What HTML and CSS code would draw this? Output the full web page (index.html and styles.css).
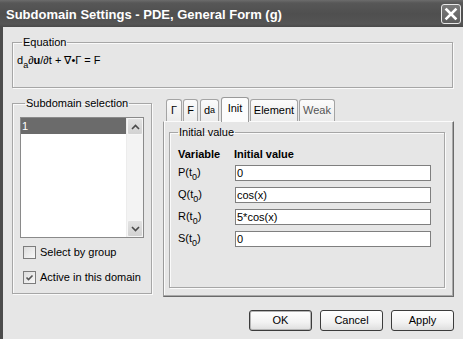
FILE: index.html
```html
<!DOCTYPE html>
<html>
<head>
<meta charset="utf-8">
<link rel="stylesheet" href="styles.css">
</head>
<body>
<div class="titlebar">
  <span class="title">Subdomain Settings - PDE, General Form (g)</span>
  <span class="close"><svg width="18" height="18" viewBox="0 0 18 18"><path d="M4.5 4.5 L13.5 13.5 M13.5 4.5 L4.5 13.5" stroke="#fff" stroke-width="2.6" stroke-linecap="square" fill="none"/></svg></span>
</div>
<div class="body">
  <fieldset class="group eq">
    <legend>Equation</legend>
    <div class="eqtext">d<span class="sub">a</span>∂<b>u</b>/∂t + ∇•Γ = F</div>
  </fieldset>
  <div class="main">
    <fieldset class="group subsel">
      <legend>Subdomain selection</legend>
      <div class="listbox">
        <div class="items"><div class="item sel">1</div></div>
        <div class="scrollbar">
          <span class="sbtn"><svg width="9" height="6" viewBox="0 0 9 6"><path d="M1 5 L4.5 1.5 L8 5" stroke="#4a4a4a" stroke-width="1.6" fill="none"/></svg></span>
          <span class="track"></span>
          <span class="sbtn"><svg width="9" height="6" viewBox="0 0 9 6"><path d="M1 1 L4.5 4.5 L8 1" stroke="#4a4a4a" stroke-width="1.6" fill="none"/></svg></span>
        </div>
      </div>
      <div class="check first"><span class="box"></span>Select by group</div>
      <div class="check second"><span class="box"><svg width="11" height="11" viewBox="0 0 11 11"><path d="M2.5 5.5 L4.5 7.5 L8.5 3.5" stroke="#555" stroke-width="1.6" fill="none"/></svg></span>Active in this domain</div>
    </fieldset>
    <div class="tabs">
      <div class="tabstrip">
        <span class="tab w16">Γ</span>
        <span class="tab w15">F</span>
        <span class="tab w19">d<span class="sub">a</span></span>
        <span class="tab sel">Init</span>
        <span class="tab w48">Element</span>
        <span class="tab w36 dim">Weak</span>
      </div>
      <div class="panel">
        <fieldset class="group init">
          <legend>Initial value</legend>
          <div class="hdr"><span class="c1">Variable</span><span>Initial value</span></div>
          <div class="grid">
            <span class="var">P(t<span class="sub">0</span>)</span><span class="input">0</span>
            <span class="var">Q(t<span class="sub">0</span>)</span><span class="input">cos(x)</span>
            <span class="var">R(t<span class="sub">0</span>)</span><span class="input">5*cos(x)</span>
            <span class="var">S(t<span class="sub">0</span>)</span><span class="input">0</span>
          </div>
        </fieldset>
      </div>
    </div>
  </div>
  <div class="buttons">
    <span class="btn def">OK</span>
    <span class="btn">Cancel</span>
    <span class="btn">Apply</span>
  </div>
</div>
</body>
</html>
```
FILE: styles.css
```css
html, body {
  margin: 0;
  padding: 0;
}
body {
  width: 463px;
  height: 339px;
  overflow: hidden;
  background: #e6e6e6;
  font: 11px/13px "Liberation Sans", Arial, sans-serif;
  color: #000;
}
.titlebar {
  height: 27px;
  box-sizing: border-box;
  background: linear-gradient(#6c6c6c 0, #575757 3px, #4f4f4f 14px, #555 24px, #4a4a4a 27px);
  display: flex;
  align-items: center;
  justify-content: space-between;
  padding: 0 2px 0 6px;
}
.title {
  color: #fff;
  font: bold 13px/15px "Liberation Sans", Arial, sans-serif;
  margin-top: 1px;
}
.close {
  width: 20px;
  height: 20px;
  box-sizing: border-box;
  border: 1px solid #e8e8e8;
  border-radius: 3px;
  background: linear-gradient(#7a7a7a, #5e5e5e);
  display: flex;
  align-items: center;
  justify-content: center;
  margin-top: 1px;
}
.body {
  height: 312px;
  box-sizing: border-box;
  border-left: 3px solid #4c4c4c;
  padding: 9px 9px 0 9px;
}
.group {
  margin: 0;
  border: 1px solid #a6a6a6;
  box-shadow: inset 1px 1px 0 #fafafa, 1px 1px 0 #fafafa;
  min-width: 0;
}
.group legend {
  padding: 0 1px;
  margin-left: 5px;
  line-height: 13px;
}
.eq {
  padding: 5px 4px 0 4px;
  width: 441px;
  box-sizing: border-box;
}
.eqtext {
  height: 33px;
}
.sub {
  font-size: 9px;
  line-height: 0;
  vertical-align: -4px;
}
.main {
  display: flex;
  align-items: flex-start;
  margin-top: 8px;
}
.subsel {
  width: 140px;
  box-sizing: border-box;
  margin-top: 1px;
  padding: 7px 0 9px 7px;
}
.listbox {
  width: 124px;
  height: 121px;
  box-sizing: border-box;
  border: 1px solid #8a8a8a;
  background: #fff;
  display: flex;
}
.items {
  flex: 1;
}
.item {
  height: 16px;
  line-height: 16px;
  padding-left: 1px;
}
.item.sel {
  background: #6b6b6b;
  color: #fff;
}
.scrollbar {
  width: 17px;
  display: flex;
  flex-direction: column;
  background: #f3f3f3;
  border-left: 1px solid #ececec;
  box-sizing: border-box;
}
.sbtn {
  height: 17px;
  box-sizing: border-box;
  border: 1px solid #f6f6f6;
  border-radius: 2px;
  background: linear-gradient(#e2e2e2, #d2d2d2);
  display: flex;
  align-items: center;
  justify-content: center;
}
.track {
  flex: 1;
}
.check {
  display: flex;
  align-items: center;
  gap: 4px;
  height: 13px;
  margin-left: 3px;
}
.check.first {
  margin-top: 8px;
}
.check.second {
  margin-top: 12px;
}
.box {
  width: 13px;
  height: 13px;
  box-sizing: border-box;
  border: 1px solid #7c7c7c;
  background: linear-gradient(135deg, #dcdcdc, #f8f8f8);
  display: flex;
  align-items: center;
  justify-content: center;
}
.tabs {
  margin-left: 11px;
  width: 291px;
}
.tabstrip {
  display: flex;
  align-items: flex-end;
  height: 25px;
  padding-left: 3px;
  gap: 1px;
}
.tab {
  height: 22px;
  box-sizing: border-box;
  border: 1px solid #a4a4a4;
  border-bottom: none;
  border-radius: 3px 3px 0 0;
  background: linear-gradient(#fbfbfb, #ececec);
  display: flex;
  align-items: center;
  justify-content: center;
  padding-bottom: 1px;
}
.w16 { width: 16px; }
.w15 { width: 15px; }
.w19 { width: 19px; margin-left: 1px; }
.w48 { width: 48px; }
.w36 { width: 36px; }
.dim { color: #555; }
.tab.sel {
  width: 28px;
  height: 25px;
  margin: 0 0 -1px 1px;
  background: #fcfcfc;
  border-color: #999;
  position: relative;
  z-index: 1;
  padding-bottom: 3px;
}
.panel {
  height: 176px;
  box-sizing: border-box;
  border-top: 1px solid #fbfbfb;
  border-left: 1px solid #9a9a9a;
  border-right: 1px solid #6a6a6a;
  border-bottom: 1px solid #6a6a6a;
  box-shadow: inset -1px -1px 0 #a9a9a9, inset 1px 0 0 #fbfbfb;
  padding: 4px 0 0 5px;
}
.init {
  width: 276px;
  height: 162px;
  box-sizing: border-box;
  padding: 9px 0 0 8px;
}
.init legend {
  margin-left: 0;
}
.hdr {
  display: flex;
  font-weight: bold;
  height: 13px;
  margin-bottom: 4px;
}
.hdr .c1 {
  width: 56px;
}
.grid {
  display: grid;
  grid-template-columns: 57px 196px;
  grid-auto-rows: 16px;
  row-gap: 6px;
  align-items: center;
}
.var {
  line-height: 13px;
  margin-top: -2px;
}
.input {
  height: 16px;
  box-sizing: border-box;
  border: 1px solid #7f7f7f;
  background: #fff;
  padding-left: 1px;
  line-height: 14px;
}
.buttons {
  display: flex;
  justify-content: flex-end;
  gap: 8px;
  margin-top: 13px;
}
.btn {
  width: 63px;
  height: 21px;
  box-sizing: border-box;
  border: 1px solid #3c3c3c;
  border-radius: 3px;
  background: linear-gradient(#ffffff, #f2f2f2 60%, #dedede);
  display: flex;
  align-items: center;
  justify-content: center;
}
.btn.def {
  box-shadow: inset 0 0 0 1px #b4b4b4;
}
```
